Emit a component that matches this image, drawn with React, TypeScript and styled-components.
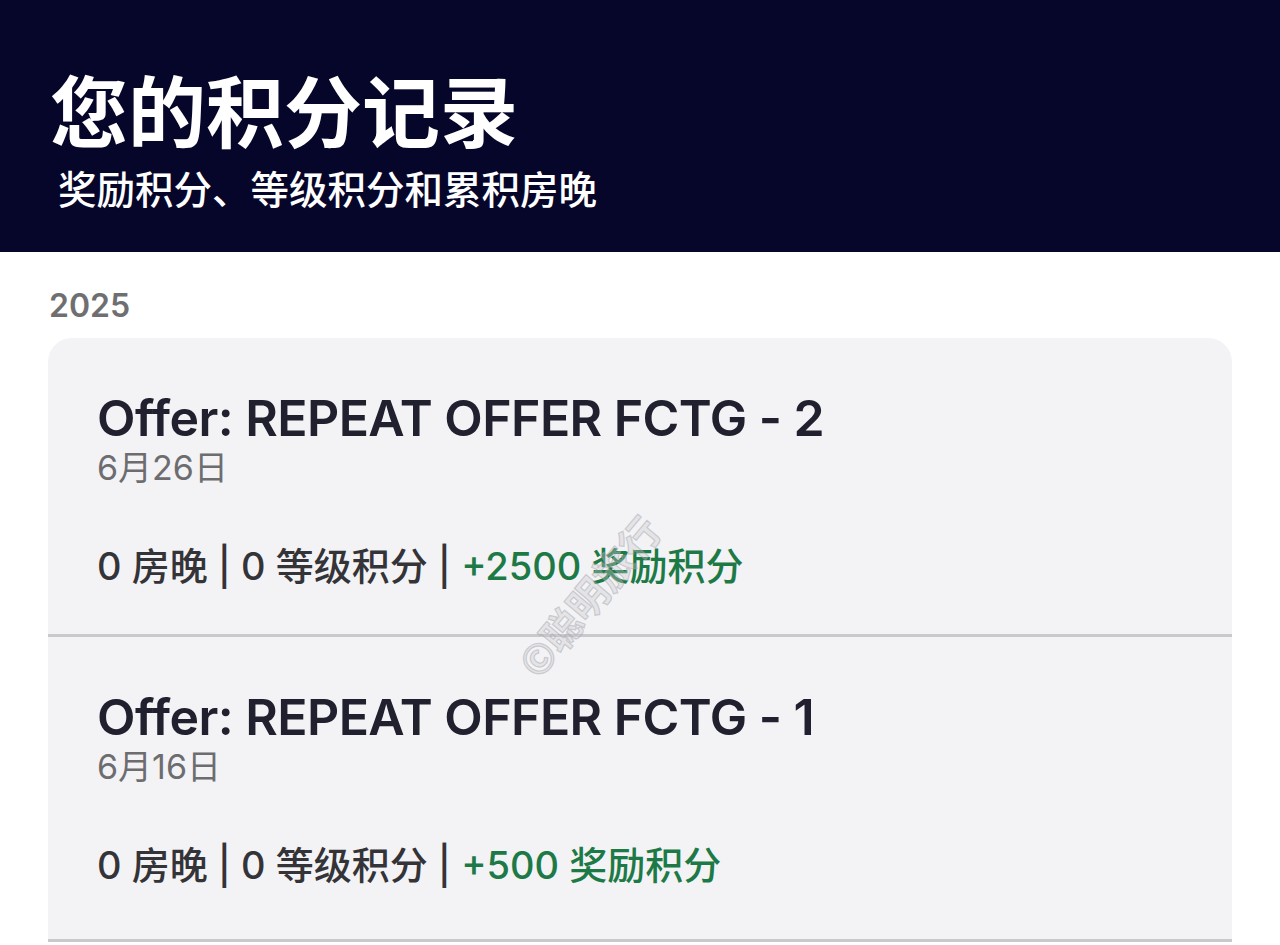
import * as React from "react";
import styled, { createGlobalStyle } from "styled-components";

const GlobalStyle = createGlobalStyle`
  html, body {
    margin: 0;
    padding: 0;
    background: #ffffff;
  }
  body {
    font-family: "Inter", "Noto Sans CJK SC", sans-serif;
    -webkit-font-smoothing: antialiased;
  }
`;

const Page = styled.div`
  position: relative;
  width: 1280px;
  height: 945px;
  overflow: hidden;
  background: #ffffff;
`;

const Header = styled.header`
  background: #06062a;
  height: 252px;
  box-sizing: border-box;
  padding: 60px 0 0 50px;
  color: #ffffff;
`;

const Title = styled.h1`
  margin: 0;
  font-family: "Noto Sans CJK SC", sans-serif;
  font-size: 78px;
  font-weight: 700;
  line-height: 96px;
`;

const Subtitle = styled.p`
  margin: 6px 0 0 8px;
  font-family: "Noto Sans CJK SC", sans-serif;
  font-size: 38.5px;
  font-weight: 500;
  line-height: 50px;
`;

const Body = styled.main`
  padding: 36px 48px 0;
`;

const Year = styled.h2`
  margin: 0 0 14px 1px;
  font-size: 32px;
  font-weight: 600;
  color: #6f6f72;
  line-height: 36px;
`;

const Card = styled.section`
  background: #f3f3f6;
  border-radius: 24px 24px 0 0;
  overflow: hidden;
`;

const Entry = styled.article<{ $height: number }>`
  padding: 50px 49px 0;
  height: ${(p) => p.$height}px;
  box-sizing: border-box;
  border-bottom: 3px solid #c9c9cd;
`;

const EntryTitle = styled.h3`
  margin: 0;
  font-size: 50px;
  font-weight: 600;
  letter-spacing: -0.55px;
  color: #20202e;
  line-height: 60px;
`;

const EntryDate = styled.div`
  font-size: 34px;
  color: #6d6d70;
  line-height: 40px;
`;

const Stats = styled.div`
  margin-top: 55px;
  font-size: 38px;
  font-weight: 500;
  color: #343438;
  line-height: 46px;
`;

const Bonus = styled.span`
  color: #1d7a46;
`;

const Watermark = styled.div`
  position: absolute;
  left: 526px;
  top: 648px;
  transform: rotate(-50deg);
  transform-origin: left center;
  font-family: "Noto Sans CJK SC", sans-serif;
  font-size: 40px;
  font-weight: 700;
  line-height: 44px;
  color: rgba(200, 200, 204, 0.35);
  -webkit-text-stroke: 1.2px rgba(160, 160, 165, 0.45);
  white-space: nowrap;
  pointer-events: none;
`;

const entries = [
  { title: "Offer: REPEAT OFFER FCTG - 2", date: "6月26日", bonus: "+2500", height: 299 },
  { title: "Offer: REPEAT OFFER FCTG - 1", date: "6月16日", bonus: "+500", height: 305 },
];

const App = () => {
  return (
    <Page>
      <GlobalStyle />
      <Header>
        <Title>您的积分记录</Title>
        <Subtitle>奖励积分、等级积分和累积房晚</Subtitle>
      </Header>
      <Body>
        <Year>2025</Year>
        <Card>
          {entries.map((e) => (
            <Entry key={e.title} $height={e.height}>
              <EntryTitle>{e.title}</EntryTitle>
              <EntryDate>{e.date}</EntryDate>
              <Stats>
                0 房晚 | 0 等级积分 | <Bonus>{e.bonus} 奖励积分</Bonus>
              </Stats>
            </Entry>
          ))}
        </Card>
      </Body>
      <Watermark>©聪明旅行</Watermark>
    </Page>
  );
};

export default App;
